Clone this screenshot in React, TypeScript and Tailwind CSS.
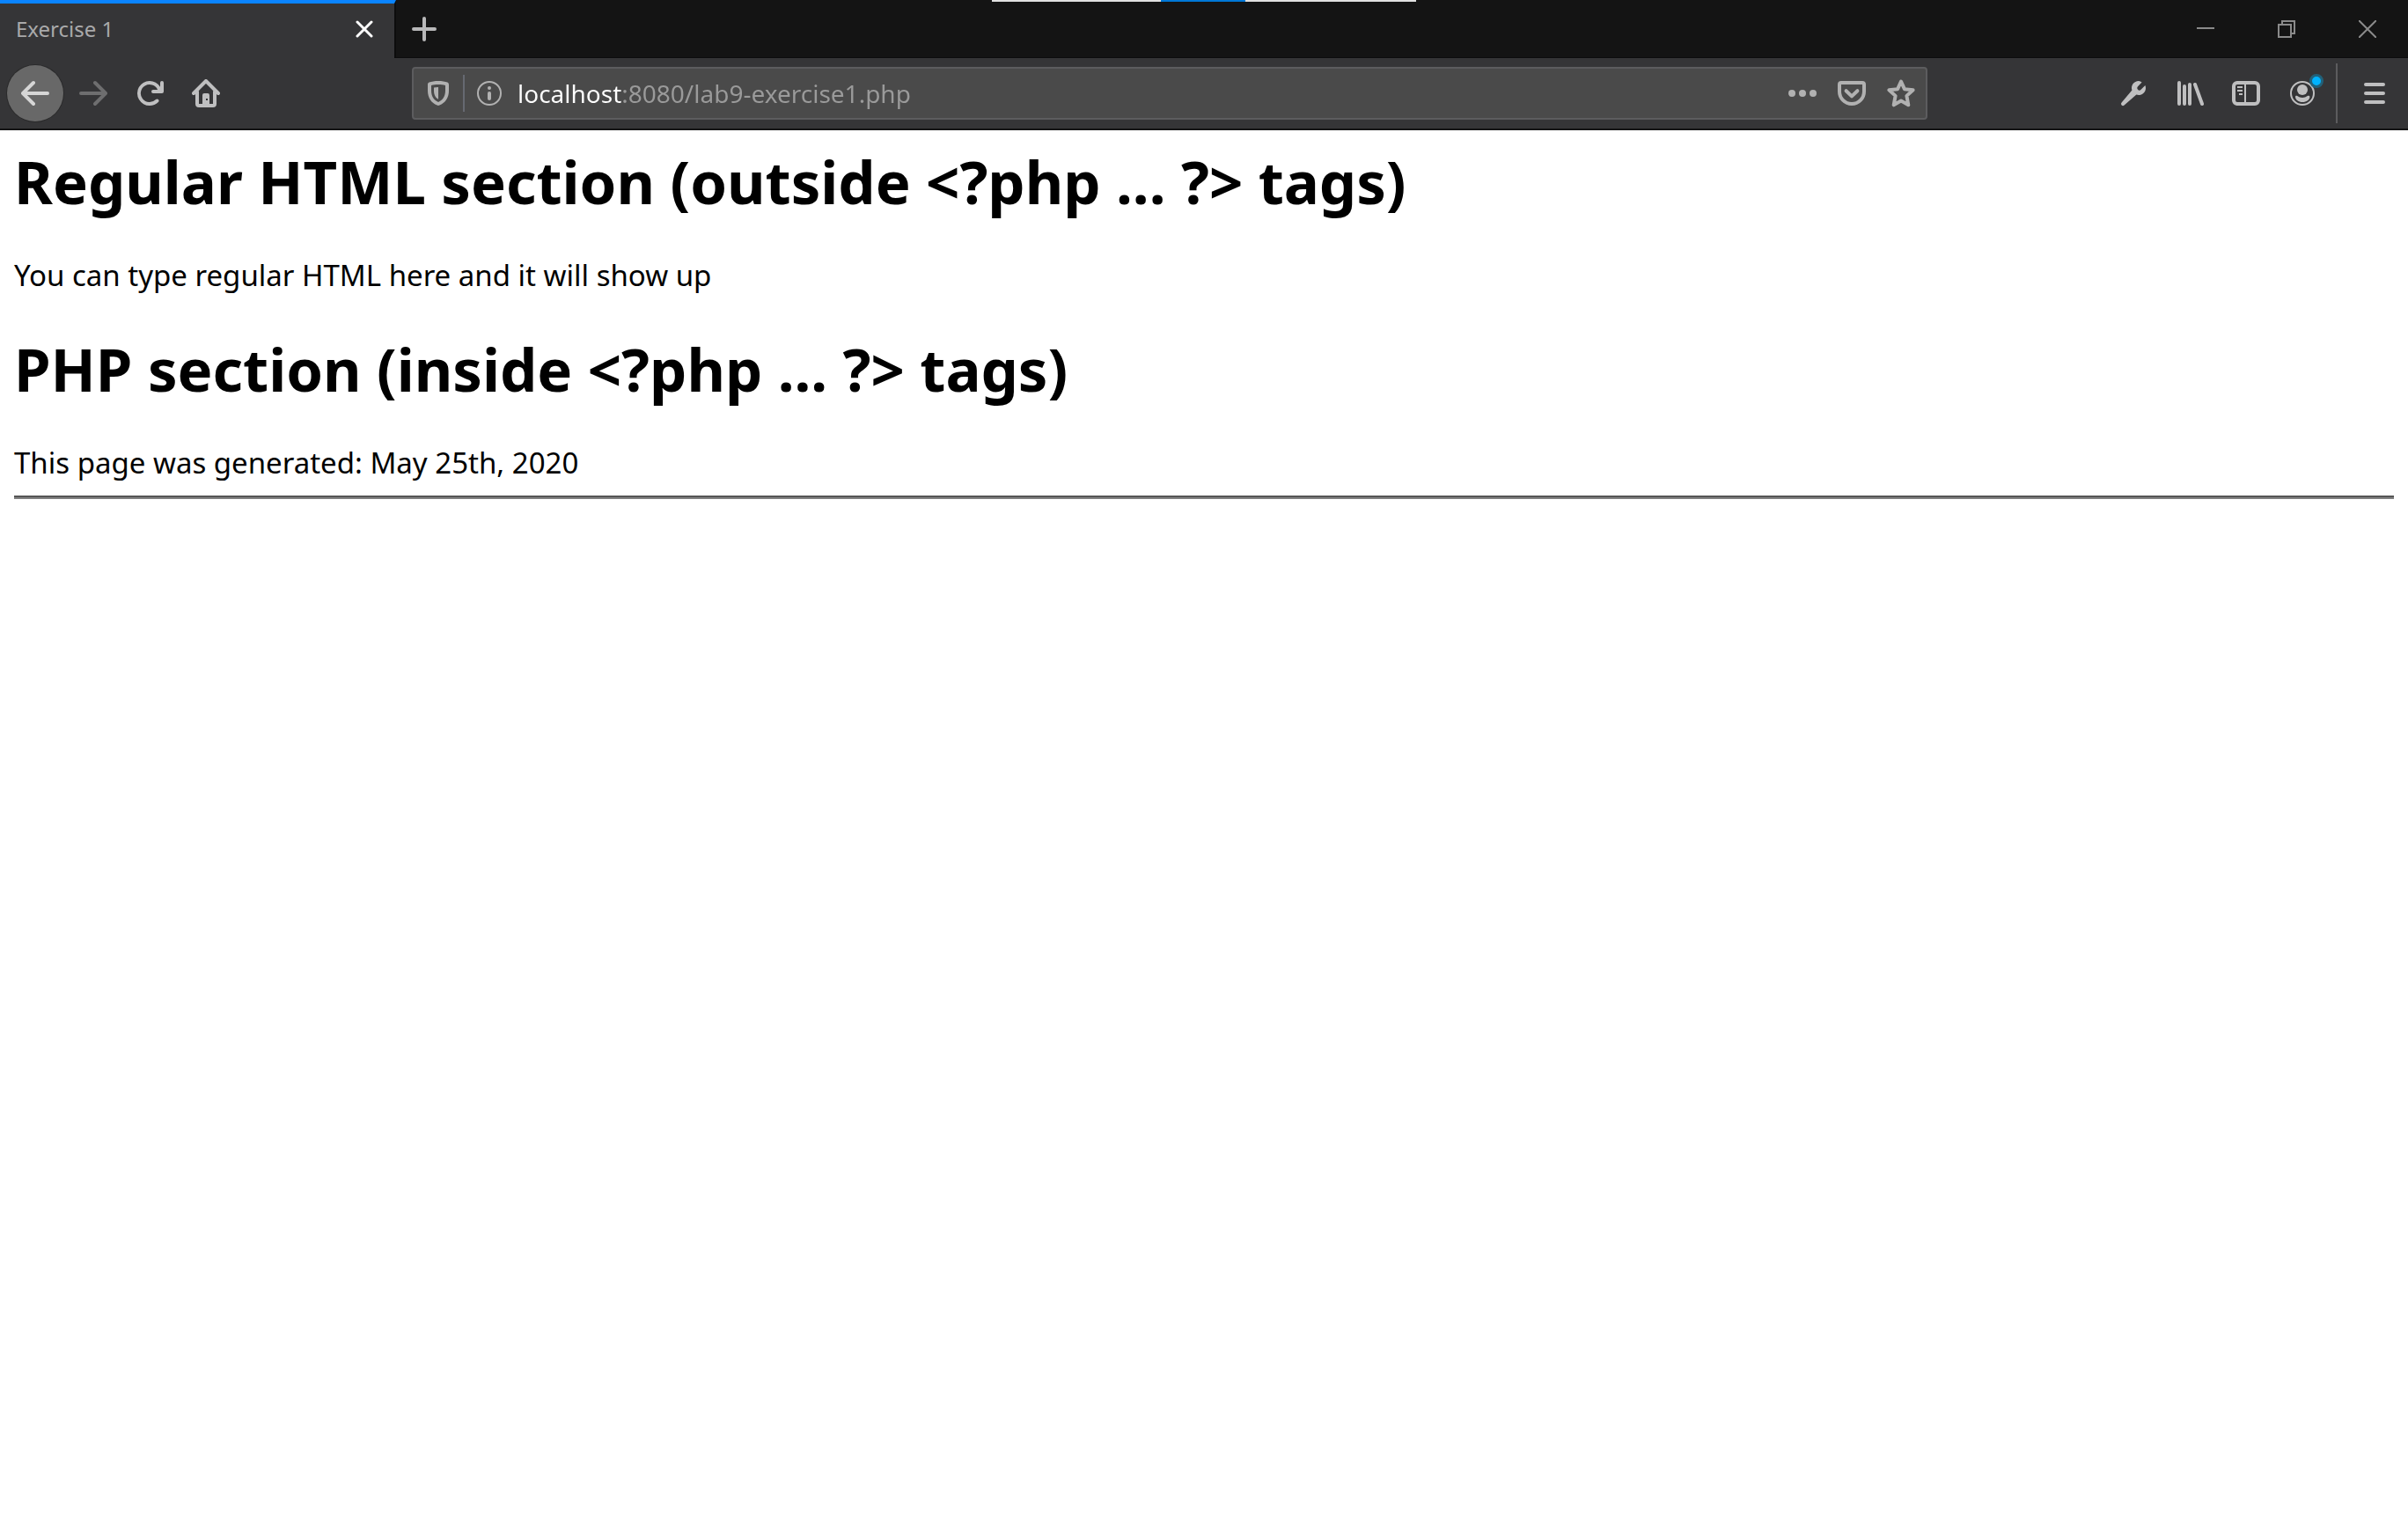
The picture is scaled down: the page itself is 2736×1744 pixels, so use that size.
import type { ReactNode } from "react";

type IconProps = { children: ReactNode; className?: string };

function Icon({ children, className = "size-8" }: IconProps) {
  return (
    <svg viewBox="0 0 16 16" fill="currentColor" aria-hidden="true" className={className}>
      {children}
    </svg>
  );
}

type ButtonProps = { label: string; children: ReactNode; className?: string };

function ToolbarButton({ label, children, className = "w-16" }: ButtonProps) {
  return (
    <button type="button" aria-label={label} className={`flex h-16 shrink-0 items-center justify-center ${className}`}>
      {children}
    </button>
  );
}

function WindowButton({ label, children }: ButtonProps) {
  return (
    <button type="button" aria-label={label} className="flex w-23 items-center justify-center text-[#8a8a8a]">
      <svg viewBox="0 0 20 20" fill="none" stroke="currentColor" strokeWidth="2" aria-hidden="true" className="size-5">
        {children}
      </svg>
    </button>
  );
}

function TabStrip() {
  return (
    <header className="relative flex h-[66px] border-b border-[#0c0c0d] bg-[#141414]">
      <div className="-mb-px flex w-[450px] items-center justify-between border-t-4 border-r-2 border-t-[#0a84ff] border-r-[#0c0c0d] bg-[#353537] pr-[18px] pb-1 pl-[18px]">
        <span className="text-[24px] leading-8 text-[#a9a9aa]">Exercise 1</span>
        <button type="button" aria-label="Close tab" className="flex size-8 items-center justify-center text-white">
          <svg viewBox="0 0 20 20" fill="none" stroke="currentColor" strokeWidth="3" strokeLinecap="round" aria-hidden="true" className="size-5">
            <path d="M2 2l16 16M18 2L2 18" />
          </svg>
        </button>
      </div>
      <button type="button" aria-label="New tab" className="flex w-16 items-center justify-center text-[#b8b8b9]">
        <Icon>
          <path d="M14 7H9V2a1 1 0 0 0-2 0v5H2a1 1 0 1 0 0 2h5v5a1 1 0 0 0 2 0V9h5a1 1 0 0 0 0-2z" />
        </Icon>
      </button>
      <div className="absolute top-0 left-1/2 flex h-0.5 w-[482px] -translate-x-1/2 bg-[#e1e1e1]">
        <div className="ml-48 w-24 bg-[#0078d7]" />
      </div>
      <div className="ml-auto flex">
        <WindowButton label="Minimize">
          <path d="M0 9h20" />
        </WindowButton>
        <WindowButton label="Restore">
          <path d="M1 5h14v14H1zM5 5V1h14v14h-4" />
        </WindowButton>
        <WindowButton label="Close">
          <path d="M0 0l20 20M20 0L0 20" />
        </WindowButton>
      </div>
    </header>
  );
}

function AddressBar() {
  return (
    <div className="flex h-15 min-w-0 flex-1 items-center rounded-sm border-2 border-[#5c5c5e] bg-[#4a4a4a] text-[#b1b1b1]">
      <button type="button" aria-label="Tracking protection" className="flex w-14 items-center justify-center">
        <Icon>
          <path
            fillRule="evenodd"
            d="M8 1c2 0 3.900.300 5.200.800A1.300 1.300 0 0 1 14 3v3.500c0 4.200-2.200 7-5.300 8.300a1.800 1.800 0 0 1-1.400 0C4.200 13.500 2 10.700 2 6.500V3c0-.600.300-1 .800-1.200C4.100 1.300 6 1 8 1zm0 2c-1.500 0-2.900.200-4 .500v3c0 3.300 1.600 5.400 4 6.500 2.400-1.100 4-3.200 4-6.500v-3C10.900 3.200 9.500 3 8 3z"
          />
          <path d="M8 4.500v6.900C6.400 10.400 5.500 9 5.500 6.500V4.800z" />
        </Icon>
      </button>
      <div className="h-[42px] w-0.5 bg-[#666971]" />
      <button type="button" aria-label="Site information" className="flex w-14 items-center justify-center">
        <Icon>
          <circle cx="8" cy="8" r="6.500" fill="none" stroke="currentColor" />
          <circle cx="8" cy="5" r="1" />
          <rect x="7" y="7" width="2" height="5" rx="1" />
        </Icon>
      </button>
      <input
        type="text"
        aria-label="Address"
        defaultValue="localhost:8080/lab9-exercise1.php"
        className="ml-1 h-14 min-w-0 flex-1 bg-[linear-gradient(to_right,#ffffff_118px,#9a9a9a_118px)] bg-clip-text text-[28px] text-transparent outline-none"
      />
      <button type="button" aria-label="Page actions" className="flex w-14 items-center justify-center">
        <Icon>
          <circle cx="2" cy="8" r="2" />
          <circle cx="8" cy="8" r="2" />
          <circle cx="14" cy="8" r="2" />
        </Icon>
      </button>
      <button type="button" aria-label="Save to Pocket" className="flex w-14 items-center justify-center">
        <Icon>
          <g fill="none" stroke="currentColor" strokeWidth="2" strokeLinecap="round" strokeLinejoin="round">
            <path d="M2 2h12a1 1 0 0 1 1 1v4A7 7 0 0 1 1 7V3a1 1 0 0 1 1-1z" />
            <path d="M4.800 6.600L8 9.700l3.200-3.100" />
          </g>
        </Icon>
      </button>
      <button type="button" aria-label="Bookmark this page" className="flex w-14 items-center justify-center">
        <Icon>
          <path
            fill="none"
            stroke="currentColor"
            strokeWidth="2"
            strokeLinejoin="round"
            d="M8 1.300l1.950 4.300 4.850.550-3.600 3.300.950 5.200L8 12.300l-4.150 2.350.950-5.200-3.600-3.300 4.850-.550z"
          />
        </Icon>
      </button>
    </div>
  );
}

function Toolbar() {
  return (
    <nav aria-label="Navigation" className="flex h-[82px] items-center border-b-2 border-[#141415] bg-[#353537] pl-2 text-[#bfbfc0]">
      <ToolbarButton label="Back" className="w-16 rounded-full bg-[#686868] text-[#d6d6d6] ring-1 ring-[#2a2a2b]">
        <Icon>
          <path d="M15 7H3.414l4.293-4.293a1 1 0 0 0-1.414-1.414l-6 6a1 1 0 0 0 0 1.414l6 6a1 1 0 0 0 1.414-1.414L3.414 9H15a1 1 0 0 0 0-2z" />
        </Icon>
      </ToolbarButton>
      <ToolbarButton label="Forward" className="ml-0.5 w-16 text-[#6e6e6f]">
        <Icon>
          <path d="M1 7h11.586L8.293 2.707a1 1 0 0 1 1.414-1.414l6 6a1 1 0 0 1 0 1.414l-6 6a1 1 0 0 1-1.414-1.414L12.586 9H1a1 1 0 0 1 0-2z" />
        </Icon>
      </ToolbarButton>
      <ToolbarButton label="Reload">
        <Icon>
          <path d="M15 1a1 1 0 0 0-1 1v2.418A6.995 6.995 0 1 0 8 15a6.954 6.954 0 0 0 4.950-2.050 1 1 0 0 0-1.414-1.414A5.019 5.019 0 1 1 12.549 6H10a1 1 0 0 0 0 2h5a1 1 0 0 0 1-1V2a1 1 0 0 0-1-1z" />
        </Icon>
      </ToolbarButton>
      <ToolbarButton label="Home">
        <Icon>
          <g fill="none" stroke="currentColor" strokeWidth="2" strokeLinecap="round" strokeLinejoin="round">
            <path d="M1 8l7-7 7 7M3 7v7a1 1 0 0 0 1 1h8a1 1 0 0 0 1-1V7" />
          </g>
          <path
            fillRule="evenodd"
            d="M7 8h2a1 1 0 0 1 1 1v6H6V9a1 1 0 0 1 1-1zm1 3v1h1v-1z"
          />
        </Icon>
      </ToolbarButton>
      <div className="w-[202px]" />
      <AddressBar />
      <div className="w-[202px]" />
      <ToolbarButton label="Web developer">
        <Icon>
          <path d="M14.700 3.500l-2.400 2.400a1.300 1.300 0 0 1-1.800 0 1.300 1.300 0 0 1 0-1.800l2.300-2.400A4 4 0 0 0 11 1a4 4 0 0 0-3.800 5.300L1.300 13.200a1 1 0 0 0 1.500 1.500l6.900-5.900A4 4 0 0 0 15 5c0-.500-.100-1-.300-1.500z" />
        </Icon>
      </ToolbarButton>
      <ToolbarButton label="Library">
        <Icon>
          <g fill="none" stroke="currentColor" strokeWidth="2" strokeLinecap="round">
            <path d="M2 2v12M5 4v10M8 3v11M11 3l4 11" />
          </g>
        </Icon>
      </ToolbarButton>
      <ToolbarButton label="Sidebars">
        <Icon>
          <rect x="1" y="2" width="14" height="12" rx="2" fill="none" stroke="currentColor" strokeWidth="2" />
          <path d="M7 3h1v10H7zM3 4h3v1H3zM3 6h3v1H3zM4 8h2v1H4z" />
        </Icon>
      </ToolbarButton>
      <ToolbarButton label="Account" className="relative w-16">
        <Icon>
          <circle cx="8" cy="8" r="6.500" fill="none" stroke="currentColor" />
          <circle cx="8" cy="6" r="3" />
          <path d="M4 10c0-.600.600-.900 1.100-.500 1.700 1.300 4.100 1.300 5.800 0 .500-.400 1.300-.100 1.300.500C12.200 11.700 10.300 13 8.100 13S4 11.700 4 10z" />
        </Icon>
        <span className="absolute top-2.5 right-2 size-4 rounded-full border-3 border-[#226179] bg-[#00b3ff]" />
      </ToolbarButton>
      <div className="ml-1.5 h-[68px] w-0.5 bg-[#5c5c5e]" />
      <ToolbarButton label="Open menu" className="w-20 pl-1">
        <Icon>
          <path d="M3 2h10a1 1 0 0 1 0 2H3a1 1 0 0 1 0-2zM3 7h10a1 1 0 0 1 0 2H3a1 1 0 0 1 0-2zM3 12h10a1 1 0 0 1 0 2H3a1 1 0 0 1 0-2z" />
        </Icon>
      </ToolbarButton>
    </nav>
  );
}

export default function App() {
  return (
    <div className="min-h-screen bg-white font-['Noto_Sans','Open_Sans',sans-serif] text-black">
      <TabStrip />
      <Toolbar />
      <main className="px-4 pt-3.5">
        <h1 className="text-[67px] leading-[88px] font-bold">Regular HTML section (outside &lt;?php ... ?&gt; tags)</h1>
        <p className="mt-[42px] text-[33px] leading-[42px]">You can type regular HTML here and it will show up</p>
        <h1 className="mt-[41px] text-[67px] leading-[88px] font-bold">PHP section (inside &lt;?php ... ?&gt; tags)</h1>
        <p className="mt-[42px] text-[33px] leading-[42px]">This page was generated: May 25th, 2020</p>
        <hr className="mt-4 h-1 border-t-2 border-b-2 border-t-[#555555] border-b-[#808080]" />
      </main>
    </div>
  );
}
